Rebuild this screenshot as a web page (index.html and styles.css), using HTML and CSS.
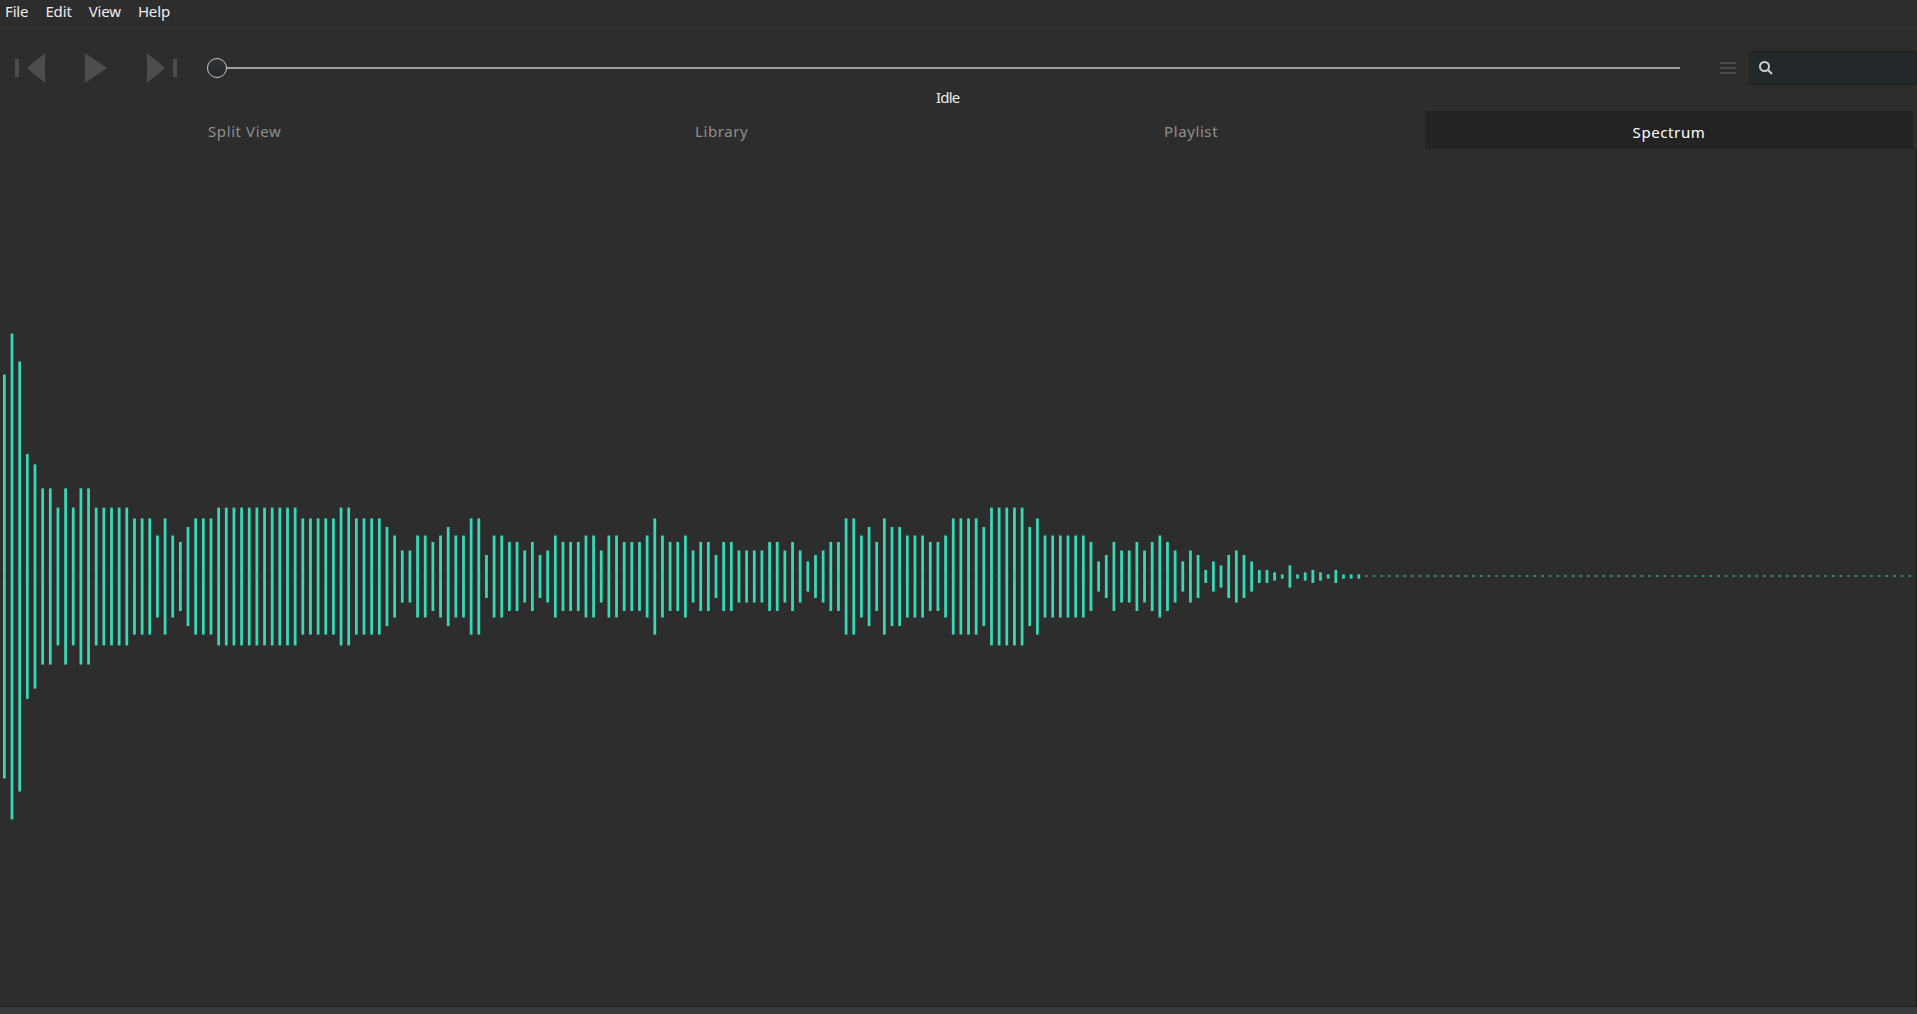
FILE: index.html
```html
<!DOCTYPE html>
<html lang="en">
<head>
<meta charset="utf-8">
<title>Music Player</title>
<link rel="stylesheet" href="styles.css">
</head>
<body>
<nav class="menubar"><span>File</span><span>Edit</span><span>View</span><span>Help</span></nav>
<header class="toolbar">
  <div class="transport">
    <svg width="30" height="30" viewBox="0 0 30 30"><path d="M0 6h4v18H0zM30 0v30L12 15z"/></svg>
    <svg width="22" height="30" viewBox="0 0 22 30"><path d="M0 0l22 15L0 30z"/></svg>
    <svg width="30" height="30" viewBox="0 0 30 30"><path d="M0 0l18 15L0 30zM26 6h4v18h-4z"/></svg>
  </div>
  <div class="seek"><span class="knob"></span><span class="track"></span></div>
  <svg class="burger" width="16" height="12" viewBox="0 0 16 12"><path d="M0 0h16v2H0zM0 5h16v2H0zM0 10h16v2H0z"/></svg>
  <div class="search">
    <svg width="14" height="14" viewBox="0 0 14 14"><circle cx="5.5" cy="5.5" r="4.5"/><path d="M8.8 8.8l4.2 4.2"/></svg>
  </div>
</header>
<div class="status">Idle</div>
<div class="tabs"><span class="tab split">Split View</span><span class="tab library">Library</span><span class="tab playlist">Playlist</span><span class="tab active">Spectrum</span></div>
<main class="view"><svg id="spectrum" width="1916" height="857"></svg></main>
<footer class="bottom"></footer>
<script src="spectrum.js"></script>
</body>
</html>
```
FILE: styles.css
```css
* { box-sizing: border-box; }
body {
  margin: 0;
  height: 1014px;
  display: flex;
  flex-direction: column;
  overflow: hidden;
  background: #2d2d2d;
  color: #eeeeec;
  font: 15px/24px "Noto Sans", sans-serif;
}
svg { display: block; flex: none; }
.menubar {
  height: 25px;
  flex: none;
  display: flex;
  gap: 17px;
  padding-left: 5px;
  border-bottom: 1px solid #292929;
  line-height: 22px;
  letter-spacing: -.15px;
}
.toolbar {
  height: 64px;
  flex: none;
  display: flex;
  align-items: center;
  padding: 22px 0 0 15px;
}
.transport {
  width: 192px;
  display: flex;
  gap: 40px;
  fill: #4d4d4d;
}
.seek {
  width: 1473px;
  display: flex;
  align-items: center;
}
.knob {
  width: 20px;
  height: 20px;
  border: 1px solid #c8c8c8;
  border-radius: 50%;
  background: linear-gradient(#2f3538, #23292b);
}
.track { flex: 1; height: 2px; background: #9d9d9d; }
.burger { margin-left: 40px; fill: #4a4a4a; }
.search {
  width: 168px;
  height: 34px;
  margin-left: 13px;
  display: flex;
  align-items: center;
  padding-left: 9px;
  border: 1px solid #1b2022;
  border-radius: 3px;
  background: #23282b;
}
.search svg { fill: none; stroke: #cfcfcf; stroke-width: 2; }
.status {
  height: 17px;
  flex: none;
  padding-left: 936px;
  line-height: 16px;
  letter-spacing: -.8px;
}
.tabs {
  height: 43px;
  flex: none;
  display: flex;
  padding: 5px 4px 0 0;
}
.tab {
  height: 38px;
  line-height: 40px;
  color: #8e908f;
  letter-spacing: .6px;
}
.split { width: 487px; padding-left: 208px; }
.library { width: 469px; padding-left: 208px; }
.playlist { flex: 1; padding-left: 208px; }
.active {
  width: 488px;
  background: #232323;
  color: #fff;
  line-height: 42px;
  text-align: center;
}
.view { flex: 1; min-height: 0; border-right: 1px solid #1d1d1d; }
.bottom { height: 8px; flex: none; background: #373b3e; border-top: 1px solid #1d1d1d; }
```
FILE: spectrum.js
```js
// Half-heights of the quantised levels, in pixels.
const levels = {
  1: 201.9, 2: 242.9, 3: 215, 4: 122.4, 5: 112.1,
  M: 88.1, A: 68.9, B: 58.1, C: 49.5, D: 41, E: 34.5, F: 26,
  G: 21.5, H: 15.1, I: 11.1, J: 6.5, K: 4.1, L: 2.1
};
const bands =
  '12345' + 'MMAMAMMAAAAABBBDBDECBBBAAAAAAAAAAABBB' +
  'BBAABBBBCDFFDDEDCDDBBGDDEEFEGFDEEEDDFDDEEE' +
  'DBDEEDFEEGEEFFFFEEFEFHGFEEBBDCEBCCDDDEEDBB' +
  'BBCAAAAACBDDDDDDEHGEFFEFEDEFHFGJHIGFGHJJK' +
  'LILKJKLJLLL';
const svg = document.getElementById('spectrum');
const center = 427.5;
const count = 250, step = 7.652, width = 2.75;

function rect(x, y, height, fill) {
  const r = document.createElementNS('http://www.w3.org/2000/svg', 'rect');
  for (const [name, value] of Object.entries({ x, y, width, height, fill })) {
    r.setAttribute(name, value);
  }
  svg.appendChild(r);
}

for (let i = 0; i < count; i++) {
  const x = 3 + i * step;
  const half = levels[bands[i]];
  if (half) rect(x, center - half, half * 2, '#38d9b9');
  // Baseline dash, drawn over the bar where there is one.
  rect(x, center - 1.5, 2, half ? 'rgba(52,190,163,.5)' : '#348474');
}
```
